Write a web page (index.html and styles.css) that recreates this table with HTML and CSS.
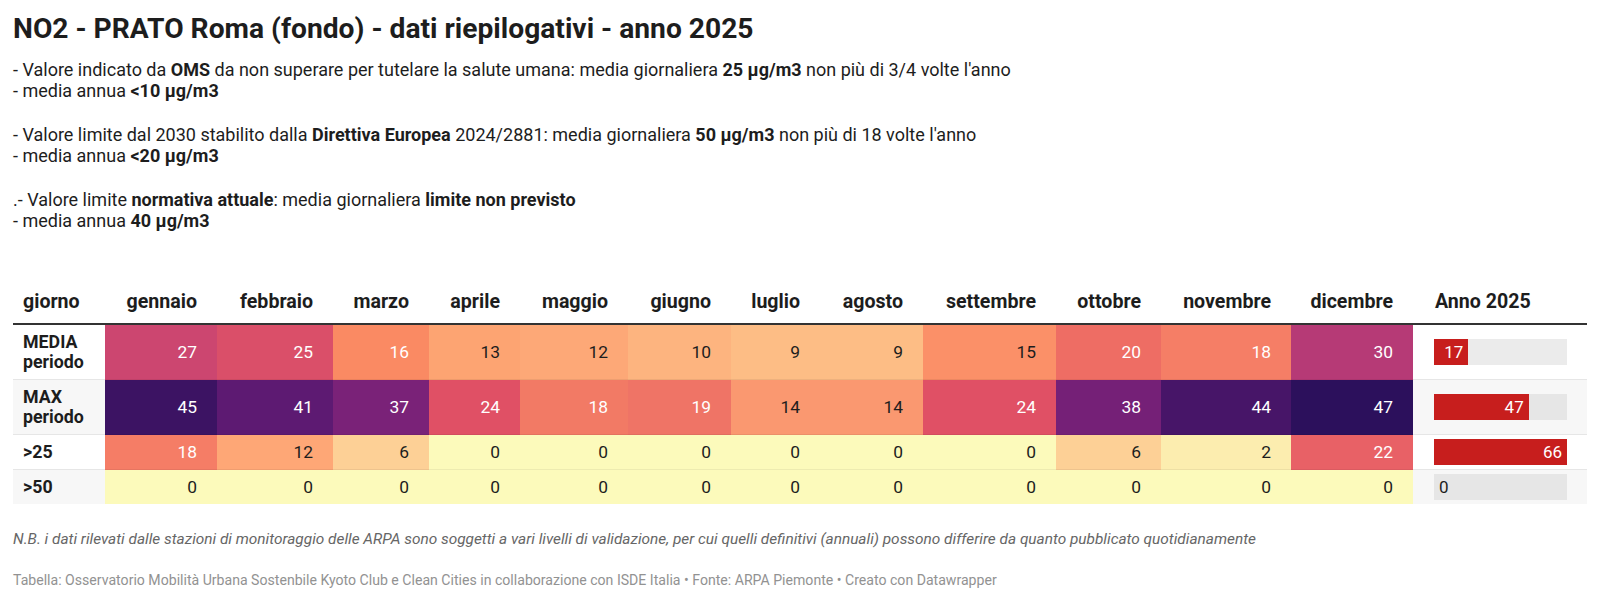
FILE: index.html
```html
<!DOCTYPE html>
<html lang="it">
<head>
<meta charset="utf-8">
<title>NO2 - PRATO Roma (fondo)</title>
<link rel="stylesheet" href="styles.css">
</head>
<body>
<div class="chart">
  <h1 class="title">NO2 - PRATO Roma (fondo) - dati riepilogativi - anno 2025</h1>
  <div class="desc">
    <p>- Valore indicato da <b>OMS</b> da non superare per tutelare la salute umana: media giornaliera <b>25 µg/m3</b> non più di 3/4 volte l'anno<br>- media annua <b>&lt;10 µg/m3</b></p>
    <p>- Valore limite dal 2030 stabilito dalla <b>Direttiva Europea</b> 2024/2881: media giornaliera <b>50 µg/m3</b> non più di 18 volte l'anno<br>- media annua <b>&lt;20 µg/m3</b></p>
    <p>.- Valore limite <b>normativa attuale</b>: media giornaliera <b>limite non previsto</b><br>- media annua <b>40 µg/m3</b></p>
  </div>

  <table class="heat">
    <colgroup>
      <col class="c-label"><col class="c-gen"><col class="c-feb"><col class="c-mar"><col class="c-apr"><col class="c-mag"><col class="c-giu"><col class="c-lug"><col class="c-ago"><col class="c-set"><col class="c-ott"><col class="c-nov"><col class="c-dic"><col class="c-anno">
    </colgroup>
    <thead>
      <tr>
        <th class="lab">giorno</th>
        <th>gennaio</th><th>febbraio</th><th>marzo</th><th>aprile</th><th>maggio</th><th>giugno</th><th>luglio</th><th>agosto</th><th>settembre</th><th>ottobre</th><th>novembre</th><th>dicembre</th>
        <th class="anno">Anno 2025</th>
      </tr>
    </thead>
    <tbody>
      <tr class="odd">
        <td class="lab">MEDIA<br>periodo</td>
        <td class="w" style="background:#cc4670">27</td>
        <td class="w" style="background:#da4f69">25</td>
        <td class="w" style="background:#fa8a63">16</td>
        <td style="background:#fda472">13</td>
        <td style="background:#fda877">12</td>
        <td style="background:#fdb47f">10</td>
        <td style="background:#fdbd85">9</td>
        <td style="background:#fdbd85">9</td>
        <td style="background:#fb9068">15</td>
        <td class="w" style="background:#ee6d64">20</td>
        <td class="w" style="background:#f57e66">18</td>
        <td class="w" style="background:#b63a76">30</td>
        <td class="anno"><div class="bar"><div class="fill" style="width:25.76%">17</div></div></td>
      </tr>
      <tr class="even">
        <td class="lab">MAX<br>periodo</td>
        <td class="w" style="background:#3c1363">45</td>
        <td class="w" style="background:#5d1a72">41</td>
        <td class="w" style="background:#7a2278">37</td>
        <td class="w" style="background:#e05065">24</td>
        <td class="w" style="background:#f27a65">18</td>
        <td class="w" style="background:#ef7466">19</td>
        <td style="background:#fa9870">14</td>
        <td style="background:#fa9870">14</td>
        <td class="w" style="background:#e05065">24</td>
        <td class="w" style="background:#752077">38</td>
        <td class="w" style="background:#471568">44</td>
        <td class="w" style="background:#2c105c">47</td>
        <td class="anno"><div class="bar"><div class="fill" style="width:71.21%">47</div></div></td>
      </tr>
      <tr class="odd">
        <td class="lab">&gt;25</td>
        <td class="w" style="background:#f57d66">18</td>
        <td style="background:#fea776">12</td>
        <td style="background:#fdd096">6</td>
        <td style="background:#fcfabb">0</td>
        <td style="background:#fcfabb">0</td>
        <td style="background:#fcfabb">0</td>
        <td style="background:#fcfabb">0</td>
        <td style="background:#fcfabb">0</td>
        <td style="background:#fcfabb">0</td>
        <td style="background:#fdd096">6</td>
        <td style="background:#fcedaf">2</td>
        <td class="w" style="background:#e86166">22</td>
        <td class="anno"><div class="bar"><div class="fill" style="width:100%">66</div></div></td>
      </tr>
      <tr class="even last">
        <td class="lab">&gt;50</td>
        <td style="background:#fcfabb">0</td>
        <td style="background:#fcfabb">0</td>
        <td style="background:#fcfabb">0</td>
        <td style="background:#fcfabb">0</td>
        <td style="background:#fcfabb">0</td>
        <td style="background:#fcfabb">0</td>
        <td style="background:#fcfabb">0</td>
        <td style="background:#fcfabb">0</td>
        <td style="background:#fcfabb">0</td>
        <td style="background:#fcfabb">0</td>
        <td style="background:#fcfabb">0</td>
        <td style="background:#fcfabb">0</td>
        <td class="anno"><div class="bar"><span class="zero">0</span></div></td>
      </tr>
    </tbody>
  </table>

  <p class="note">N.B. i dati rilevati dalle stazioni di monitoraggio delle ARPA sono soggetti a vari livelli di validazione, per cui quelli definitivi (annuali) possono differire da quanto pubblicato quotidianamente</p>
  <p class="footer">Tabella: Osservatorio Mobilità Urbana Sostenbile Kyoto Club e Clean Cities in collaborazione con ISDE Italia • Fonte: ARPA Piemonte • Creato con Datawrapper</p>
</div>
</body>
</html>
```

FILE: styles.css
```css
html, body {
  margin: 0;
  padding: 0;
  background: #ffffff;
}

body {
  font-family: Roboto, "Liberation Sans", Arial, sans-serif;
  color: #1d1d1d;
}

.chart {
  padding: 12px 13px 0 13px;
}

.title {
  margin: 0;
  font-size: 28.2px;
  line-height: 34px;
  font-weight: 700;
  color: #1d1d1d;
}

.desc {
  margin-top: 13px;
  font-size: 18px;
  line-height: 21px;
}

.desc p {
  margin: 0 0 23px 0;
}

.desc p:last-child {
  margin-bottom: 0;
}

.desc b {
  font-weight: 700;
}

.heat {
  margin-top: 49px;
  width: 1574px;
  border-collapse: collapse;
  table-layout: fixed;
  font-size: 17.4px;
}

.c-label { width: 92px; }
.c-gen { width: 112px; }
.c-feb { width: 116px; }
.c-mar { width: 96px; }
.c-apr { width: 91px; }
.c-mag { width: 108px; }
.c-giu { width: 103px; }
.c-lug { width: 89px; }
.c-ago { width: 103px; }
.c-set { width: 133px; }
.c-ott { width: 105px; }
.c-nov { width: 130px; }
.c-dic { width: 122px; }
.c-anno { width: 174px; }

.heat th {
  font-size: 19.6px;
  line-height: 24px;
  font-weight: 700;
  text-align: right;
  padding: 10px 20px 9px 0;
  border-bottom: 2px solid #333333;
  white-space: nowrap;
  vertical-align: bottom;
}

.heat th.lab {
  text-align: left;
  padding-left: 10px;
}

.heat th.anno {
  text-align: left;
  padding-left: 22px;
}

.heat td {
  padding: 7px 20px 7px 0;
  line-height: 20px;
  text-align: right;
  vertical-align: middle;
  border-bottom: 1px solid rgba(0, 0, 0, 0.06);
  white-space: nowrap;
}

.heat td.w {
  color: #ffffff;
}

.heat td.lab {
  text-align: left;
  padding-left: 10px;
  font-weight: 700;
  font-size: 17.8px;
  border-bottom-color: #e6e6e6;
}

.heat tr.even td.lab,
.heat tr.even td.anno {
  background: #f7f7f7;
}

.heat tr.last td {
  border-bottom: none;
}

.heat td.anno {
  padding: 0 20px 0 21px;
  border-bottom-color: #e6e6e6;
}

.bar {
  height: 26px;
  background: #ebebeb;
  display: flex;
  align-items: center;
}

.heat tr.even .bar {
  background: #e6e6e6;
}

.fill {
  height: 26px;
  background: #c71e1d;
  color: #ffffff;
  text-align: right;
  padding-right: 5px;
  box-sizing: border-box;
  line-height: 26px;
  font-size: 17px;
}

.zero {
  padding-left: 5px;
  line-height: 26px;
  font-size: 17px;
  color: #1d1d1d;
}

.note {
  margin: 25px 0 0 0;
  font-size: 15.4px;
  line-height: 20px;
  font-style: italic;
  color: #666666;
}

.footer {
  margin: 22px 0 0 0;
  font-size: 14.1px;
  line-height: 18px;
  color: #929292;
}
```
